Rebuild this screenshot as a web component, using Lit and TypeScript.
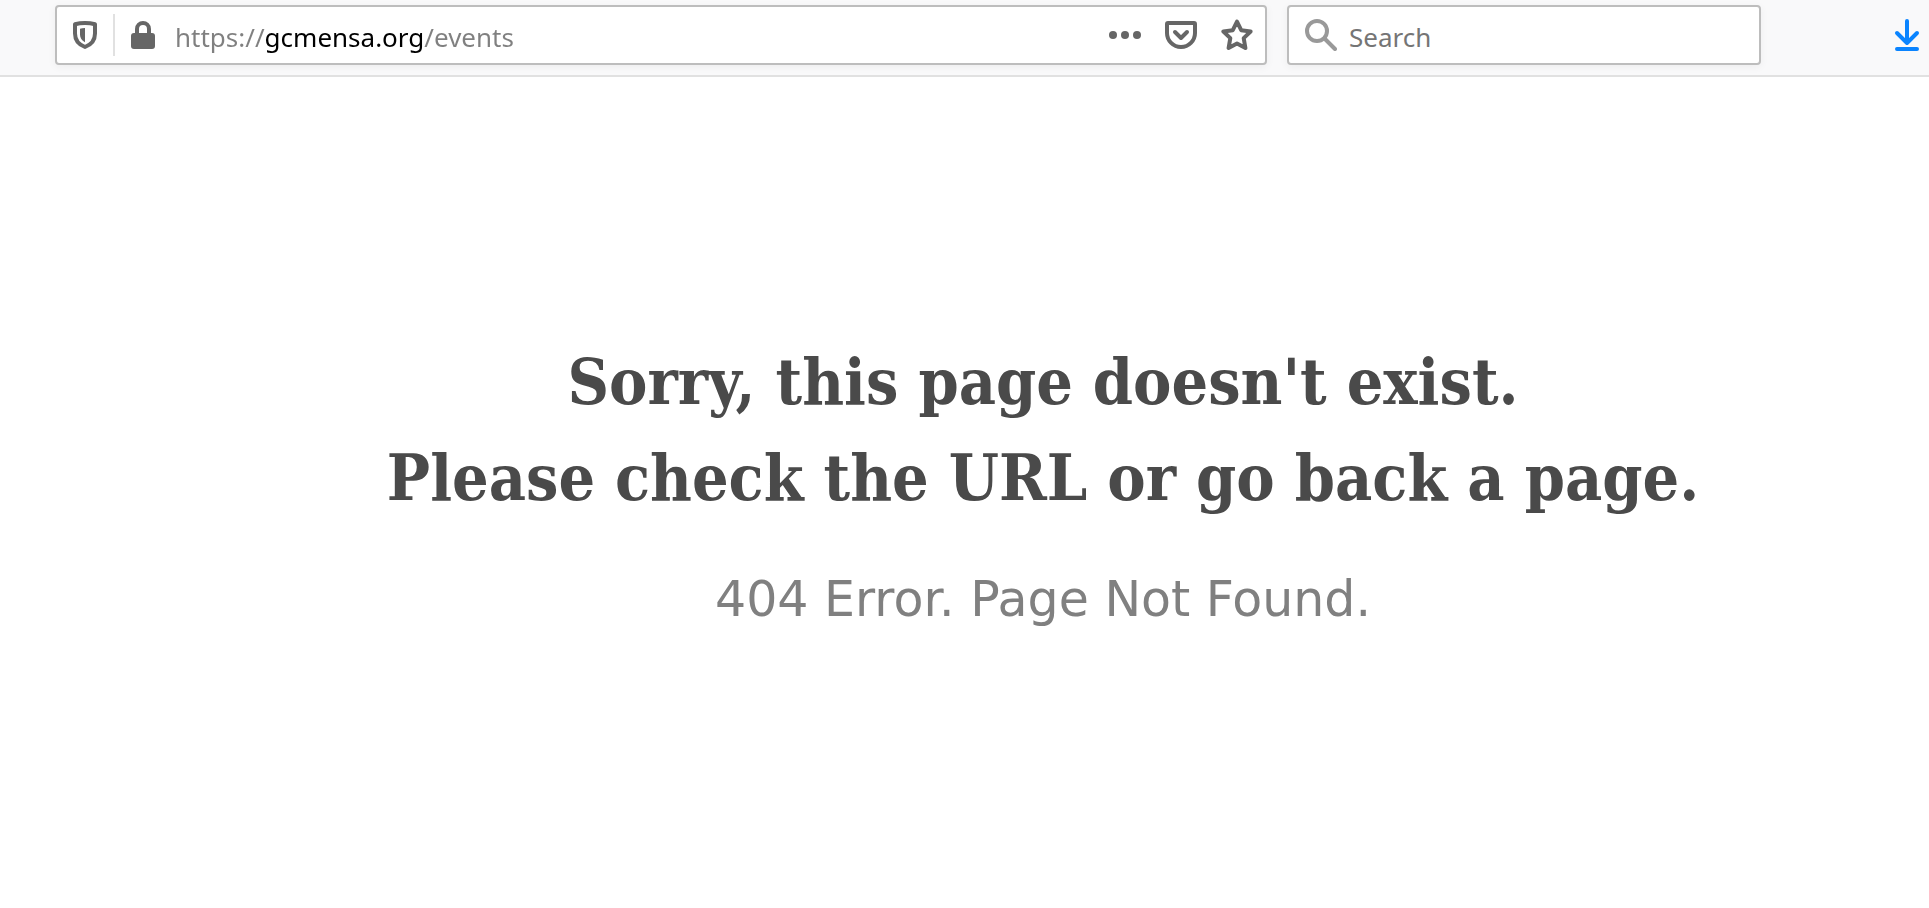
import { LitElement, html, css, svg } from "lit";
import { customElement, state } from "lit/decorators.js";

const icon = (shape: unknown) =>
  html`<svg class="icon" viewBox="0 0 32 32" aria-hidden="true">${shape}</svg>`;

const shield = icon(svg`
  <path d="M16 4c3.600 0 6.800.400 10 1.300v9.200c0 6.500-4 11.200-10 13.500C10 25.700 6 21 6 14.500V5.300C9.200 4.400 12.400 4 16 4z"
    fill="none" stroke="currentColor" stroke-width="4" stroke-linejoin="round"/>
  <path d="M16 9c-2 .1-3.600.3-5 .7v5.800c0 3.200 1.700 5.900 5 7.800z" fill="currentColor"/>`);

const lock = icon(svg`
  <rect x="4" y="14" width="24" height="16" rx="3" fill="currentColor"/>
  <path d="M10 15v-5a6 6 0 0 1 12 0v5" fill="none" stroke="currentColor" stroke-width="4"/>`);

const dots = icon(svg`
  <circle cx="4" cy="16" r="4" fill="currentColor"/>
  <circle cx="16" cy="16" r="4" fill="currentColor"/>
  <circle cx="28" cy="16" r="4" fill="currentColor"/>`);

const pocket = icon(svg`
  <g fill="none" stroke="currentColor" stroke-width="4" stroke-linecap="round" stroke-linejoin="round">
    <path d="M3 4h26a1 1 0 0 1 1 1v9a14 14 0 0 1-28 0V5a1 1 0 0 1 1-1z"/>
    <path d="M10 13l6 6 6-6"/>
  </g>`);

const star = icon(svg`
  <path d="M16 2.600l4.200 8.600 9.400 1.300-6.900 6.600 1.700 9.900L16 24.600 7.600 29l1.700-9.900-6.900-6.600 9.400-1.300z"
    fill="none" stroke="currentColor" stroke-width="4" stroke-linejoin="round"/>`);

const magnifier = icon(svg`
  <g fill="none" stroke="currentColor" stroke-width="4" stroke-linecap="round">
    <circle cx="12" cy="12" r="10"/>
    <path d="M19.500 19.500L30 30"/>
  </g>`);

const download = icon(svg`
  <g fill="none" stroke="currentColor" stroke-width="4" stroke-linecap="round" stroke-linejoin="round">
    <path d="M16 2v22M6 14l10 10 10-10M6 30h20"/>
  </g>`);

@customElement("app-root")
export class AppRoot extends LitElement {
  @state() private address = "https://gcmensa.org/events";

  static styles = css`
    :host {
      display: flex;
      flex-direction: column;
      min-height: 100vh;
      background: #fff;
    }
    .toolbar {
      display: flex;
      align-items: center;
      padding: 5px 6px 10px 55px;
      background: #f9f9fa;
      border-bottom: 2px solid #e1e1e1;
    }
    .field {
      display: flex;
      align-items: center;
      box-sizing: border-box;
      height: 60px;
      min-width: 0;
      background: #fff;
      border: 2px solid #bdbdbd;
      border-radius: 4px;
      box-shadow: 0 2px 8px rgba(0, 0, 0, 0.05);
    }
    .address {
      flex: 1;
      padding: 0 12px;
      color: #666;
    }
    .search {
      flex: 0 1 474px;
      margin-left: 20px;
      padding: 0 16px;
      color: #999;
    }
    .search label {
      display: flex;
    }
    button {
      display: flex;
      flex: none;
      padding: 0;
      border: 0;
      background: none;
      color: inherit;
    }
    .icon {
      display: block;
      width: 32px;
      height: 32px;
    }
    .divider {
      width: 2px;
      height: 42px;
      margin: 0 12px;
      background: #e1e1e1;
    }
    .text {
      flex: 1;
      min-width: 0;
      height: 36px;
      margin-top: 4px;
      padding: 0;
      border: 0;
      outline: 0;
      background: none;
      font: 26px/36px "Noto Sans", sans-serif;
    }
    .url {
      margin-left: 16px;
      color: transparent;
      background: linear-gradient(90deg, #808080 90px, #000 90px 248px, #808080 248px);
      -webkit-background-clip: text;
      background-clip: text;
    }
    .query {
      margin-left: 12px;
    }
    .query::placeholder {
      color: #757575;
      opacity: 1;
    }
    .actions {
      display: flex;
      gap: 24px;
    }
    .downloads {
      margin-left: 130px;
      color: #0a84ff;
    }
    .page {
      padding: 257px 0 40px 157px;
      text-align: center;
    }
    h1 {
      margin: 0;
      color: #4a4a4a;
      font: bold 64px/96px "DejaVu Serif Condensed", "DejaVu Serif", serif;
    }
    p {
      margin: 38px 0 0;
      color: #808080;
      font: 49px/72px "DejaVu Sans", sans-serif;
    }
  `;

  render() {
    return html`
      <header class="toolbar">
        <div class="field address">
          <button aria-label="Tracking protection">${shield}</button>
          <span class="divider"></span>
          <button aria-label="Site information">${lock}</button>
          <input
            class="text url"
            type="text"
            aria-label="Address"
            spellcheck="false"
            .value=${this.address}
            @change=${(e: Event) => (this.address = (e.target as HTMLInputElement).value)}
          />
          <div class="actions">
            <button aria-label="Page actions">${dots}</button>
            <button aria-label="Save to Pocket">${pocket}</button>
            <button aria-label="Bookmark this page">${star}</button>
          </div>
        </div>
        <div class="field search">
          <label for="query" aria-label="Search">${magnifier}</label>
          <input class="text query" id="query" type="text" placeholder="Search" />
        </div>
        <button class="downloads" aria-label="Downloads">${download}</button>
      </header>
      <main class="page">
        <h1>Sorry, this page doesn't exist.<br />Please check the URL or go back a page.</h1>
        <p>404 Error. Page Not Found.</p>
      </main>
    `;
  }
}
